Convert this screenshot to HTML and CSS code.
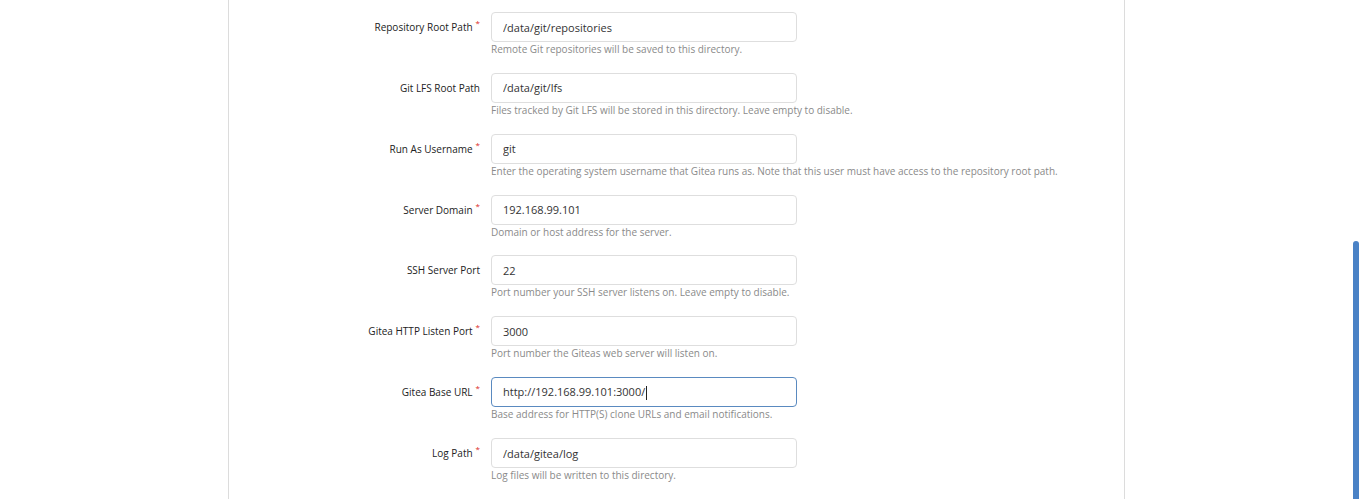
FILE: index.html
```html
<!DOCTYPE html>
<html>
<head>
<meta charset="utf-8">
<link rel="stylesheet" href="styles.css">
</head>
<body>
<div class="page">
  <div class="panel">
    <form class="form">
      <div class="row">
        <label class="label req">Repository Root Path</label>
        <div class="field">
          <input class="input" type="text" value="/data/git/repositories">
          <div class="help">Remote Git repositories will be saved to this directory.</div>
        </div>
      </div>
      <div class="row">
        <label class="label">Git LFS Root Path</label>
        <div class="field">
          <input class="input" type="text" value="/data/git/lfs">
          <div class="help">Files tracked by Git LFS will be stored in this directory. Leave empty to disable.</div>
        </div>
      </div>
      <div class="row">
        <label class="label req">Run As Username</label>
        <div class="field">
          <input class="input" type="text" value="git">
          <div class="help">Enter the operating system username that Gitea runs as. Note that this user must have access to the repository root path.</div>
        </div>
      </div>
      <div class="row">
        <label class="label req">Server Domain</label>
        <div class="field">
          <input class="input" type="text" value="192.168.99.101">
          <div class="help">Domain or host address for the server.</div>
        </div>
      </div>
      <div class="row">
        <label class="label">SSH Server Port</label>
        <div class="field">
          <input class="input" type="text" value="22">
          <div class="help">Port number your SSH server listens on. Leave empty to disable.</div>
        </div>
      </div>
      <div class="row">
        <label class="label req">Gitea HTTP Listen Port</label>
        <div class="field">
          <input class="input" type="text" value="3000">
          <div class="help">Port number the Giteas web server will listen on.</div>
        </div>
      </div>
      <div class="row">
        <label class="label req">Gitea Base URL</label>
        <div class="field">
          <div class="input focus">http://192.168.99.101:3000/<span class="caret"></span></div>
          <div class="help">Base address for HTTP(S) clone URLs and email notifications.</div>
        </div>
      </div>
      <div class="row">
        <label class="label req">Log Path</label>
        <div class="field">
          <input class="input" type="text" value="/data/gitea/log">
          <div class="help">Log files will be written to this directory.</div>
        </div>
      </div>
    </form>
  </div>
</div>
<div class="scrollbar"></div>
</body>
</html>
```

FILE: styles.css
```css
html, body {
  margin: 0;
  padding: 0;
  background: #fff;
  height: 100%;
  overflow: hidden;
}
body {
  font-family: "Open Sans", "Noto Sans", sans-serif;
  color: #333;
}
.page {
  padding-left: 228px;
}
.panel {
  width: 895px;
  height: 499px;
  border-left: 1px solid #dcdcdc;
  border-right: 1px solid #dcdcdc;
}
.form {
  padding-top: 12px;
  display: flex;
  flex-direction: column;
  gap: 14.86px;
}
.row {
  display: grid;
  grid-template-columns: 251px 306px;
  column-gap: 11px;
  align-items: start;
}
.label {
  height: 30px;
  display: flex;
  align-items: center;
  justify-content: flex-end;
  font-size: 10px;
  font-weight: 500;
  color: #222;
  white-space: nowrap;
}
.label.req::after {
  content: "*";
  color: #db2828;
  font-size: 8px;
  font-weight: 400;
  align-self: flex-start;
  margin-top: 7px;
  margin-left: 3px;
  line-height: 8px;
}
.field {
  display: flex;
  flex-direction: column;
}
.input {
  display: block;
  width: 306px;
  height: 30px;
  box-sizing: border-box;
  border: 1px solid #dedede;
  border-radius: 4px;
  padding: 0 11px;
  font-family: "Open Sans", "Noto Sans", sans-serif;
  font-size: 11px;
  color: #333;
  background: #fff;
  outline: none;
  line-height: 28px;
  margin: 0;
}
.input.focus {
  border-color: #5a8ac0;
  white-space: nowrap;
}
.caret {
  display: inline-block;
  width: 1px;
  height: 14px;
  background: #222;
  vertical-align: middle;
  margin-left: 1px;
}
.help {
  font-size: 10px;
  line-height: 16px;
  margin-top: -1px;
  margin-bottom: 1px;
  color: #8a8a8a;
  white-space: nowrap;
}
.scrollbar {
  position: fixed;
  right: 1px;
  top: 241px;
  bottom: 0;
  width: 6px;
  background: #4a82c6;
  border-radius: 3px 3px 0 0;
}
```
